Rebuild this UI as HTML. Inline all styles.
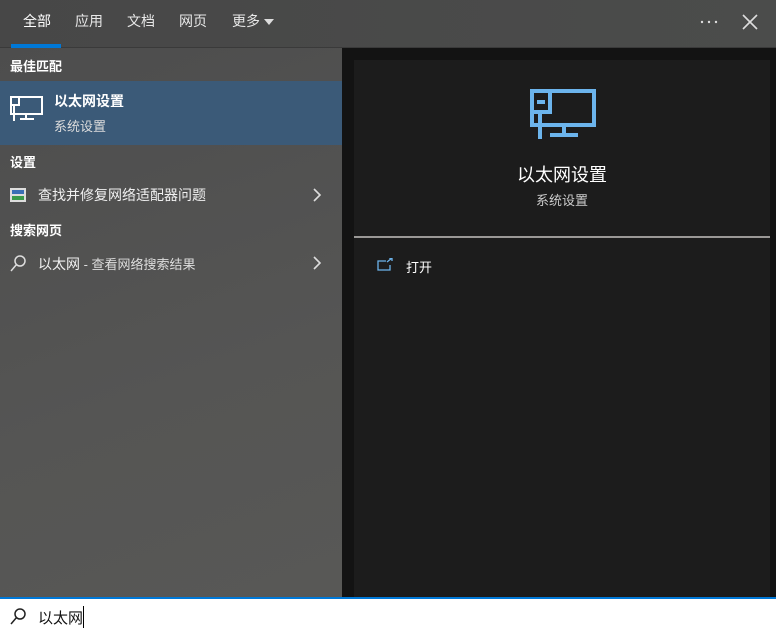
<!DOCTYPE html>
<html><head><meta charset="utf-8"><style>
*{margin:0;padding:0;box-sizing:border-box}
body{width:776px;height:634px;overflow:hidden;position:relative;font-family:"Liberation Sans","Noto Sans CJK SC",sans-serif;background:#505050;color:#fff}
.top{position:absolute;left:0;top:0;width:776px;height:48px;background:linear-gradient(90deg,#474747,#4b4c4b);border-bottom:1px solid #3a3a3a}
.tab{position:absolute;top:11px;font-size:14px;color:#e8e8e8}
.left{position:absolute;left:0;top:48px;width:342px;height:549px;background:linear-gradient(160deg,#4d4d4d,#555554 60%,#585856)}
.h{position:absolute;left:10px;font-size:13px;font-weight:bold;color:#fff}
.sel{position:absolute;left:0;top:81px;width:342px;height:64px;background:#3b5a78}
.item{position:absolute;left:38px;font-size:14px;color:#f0f0f0}
.chev{position:absolute;left:312px;font-size:14px;color:#ddd}
.right{position:absolute;left:342px;top:48px;width:434px;height:549px;background:#131313}
.panel{position:absolute;left:354px;top:60px;width:416px;height:537px;background:#1c1c1c}
.bar{position:absolute;left:0;top:597px;width:776px;height:37px;background:#fff;border-top:2px solid #0078d7}
</style></head><body>
<div class="top">
<div class="tab" style="left:23px;color:#fff">全部</div>
<div style="position:absolute;left:11px;top:44px;width:50px;height:4px;background:#0078d7"></div>
<div class="tab" style="left:75px">应用</div>
<div class="tab" style="left:127px">文档</div>
<div class="tab" style="left:179px">网页</div>
<div class="tab" style="left:232px">更多</div>
<div style="position:absolute;left:264px;top:19px;border-left:5px solid transparent;border-right:5px solid transparent;border-top:6px solid #ddd"></div>
<svg style="position:absolute;left:700px;top:20px" width="18" height="4"><circle cx="2" cy="2" r="1.2" fill="#ddd"/><circle cx="9" cy="2" r="1.2" fill="#ddd"/><circle cx="16" cy="2" r="1.2" fill="#ddd"/></svg>
<svg style="position:absolute;left:742px;top:14px" width="16" height="16"><path d="M1 1L15 15M15 1L1 15" stroke="#ddd" stroke-width="1.6"/></svg>
</div>
<div class="left">
</div>
<div class="h" style="top:56px">最佳匹配</div>
<div class="sel"></div>
<svg style="position:absolute;left:10px;top:96px" width="34" height="26" fill="none" stroke="#fff" stroke-width="2"><rect x="1" y="1" width="31" height="17"/><rect x="1" y="1" width="8" height="8"/><path d="M4 9V25M16 18V22M10 23H24"/></svg>
<div style="position:absolute;left:54px;top:91px;font-size:14px;font-weight:bold">以太网设置</div>
<div style="position:absolute;left:54px;top:116px;font-size:13px;color:#ddd">系统设置</div>
<div class="h" style="top:152px">设置</div>
<svg style="position:absolute;left:10px;top:188px" width="16" height="14"><rect width="16" height="14" fill="#ddd"/><rect x="2" y="2" width="12" height="4" fill="#3a6fb5"/><rect x="2" y="8" width="12" height="4" fill="#3a9a4a"/></svg>
<div class="item" style="top:185px">查找并修复网络适配器问题</div>
<svg class="chev" style="top:188px" width="10" height="14"><path d="M2 1L8 7L2 13" stroke="#ddd" stroke-width="1.6" fill="none"/></svg>
<div class="h" style="top:220px">搜索网页</div>
<svg style="position:absolute;left:10px;top:255px" width="16" height="17" fill="none" stroke="#ddd" stroke-width="1.5"><circle cx="10" cy="6" r="5"/><path d="M6.5 9.5L1 16"/></svg>
<div class="item" style="top:254px">以太网<span style="font-size:13px;color:#ddd"> - 查看网络搜索结果</span></div>
<svg class="chev" style="top:256px" width="10" height="14"><path d="M2 1L8 7L2 13" stroke="#ddd" stroke-width="1.6" fill="none"/></svg>
<div class="right"></div>
<div class="panel"></div>
<svg style="position:absolute;left:528px;top:87px" width="70" height="52" fill="none" stroke="#6cb4ec" stroke-width="4"><rect x="4" y="4" width="62" height="34"/><rect x="4" y="4" width="18" height="21"/><path d="M12 25V52M36 38V46M22 48H50"/><path d="M9 15H17" /></svg>
<div style="position:absolute;left:354px;width:416px;top:161px;text-align:center;font-size:18px">以太网设置</div>
<div style="position:absolute;left:354px;width:416px;top:190px;text-align:center;font-size:13px;color:#ccc">系统设置</div>
<div style="position:absolute;left:354px;top:236px;width:416px;height:2px;background:#9a9896"></div>
<svg style="position:absolute;left:377px;top:258px" width="16" height="14" fill="none" stroke="#6cb4ec" stroke-width="1.3"><path d="M9 3H1V12H13V7M10 4L15 0M12 0H15V3"/></svg>
<div style="position:absolute;left:406px;top:257px;font-size:13px">打开</div>
<div class="bar">
<svg style="position:absolute;left:10px;top:9px" width="16" height="17" fill="none" stroke="#222" stroke-width="1.5"><circle cx="10" cy="6" r="5"/><path d="M6.5 9.5L1 16"/></svg>
<div style="position:absolute;left:38px;top:8px;font-size:15px;color:#111">以太网</div>
<div style="position:absolute;left:83px;top:7px;width:1px;height:22px;background:#000"></div>
</div>
</body></html>
